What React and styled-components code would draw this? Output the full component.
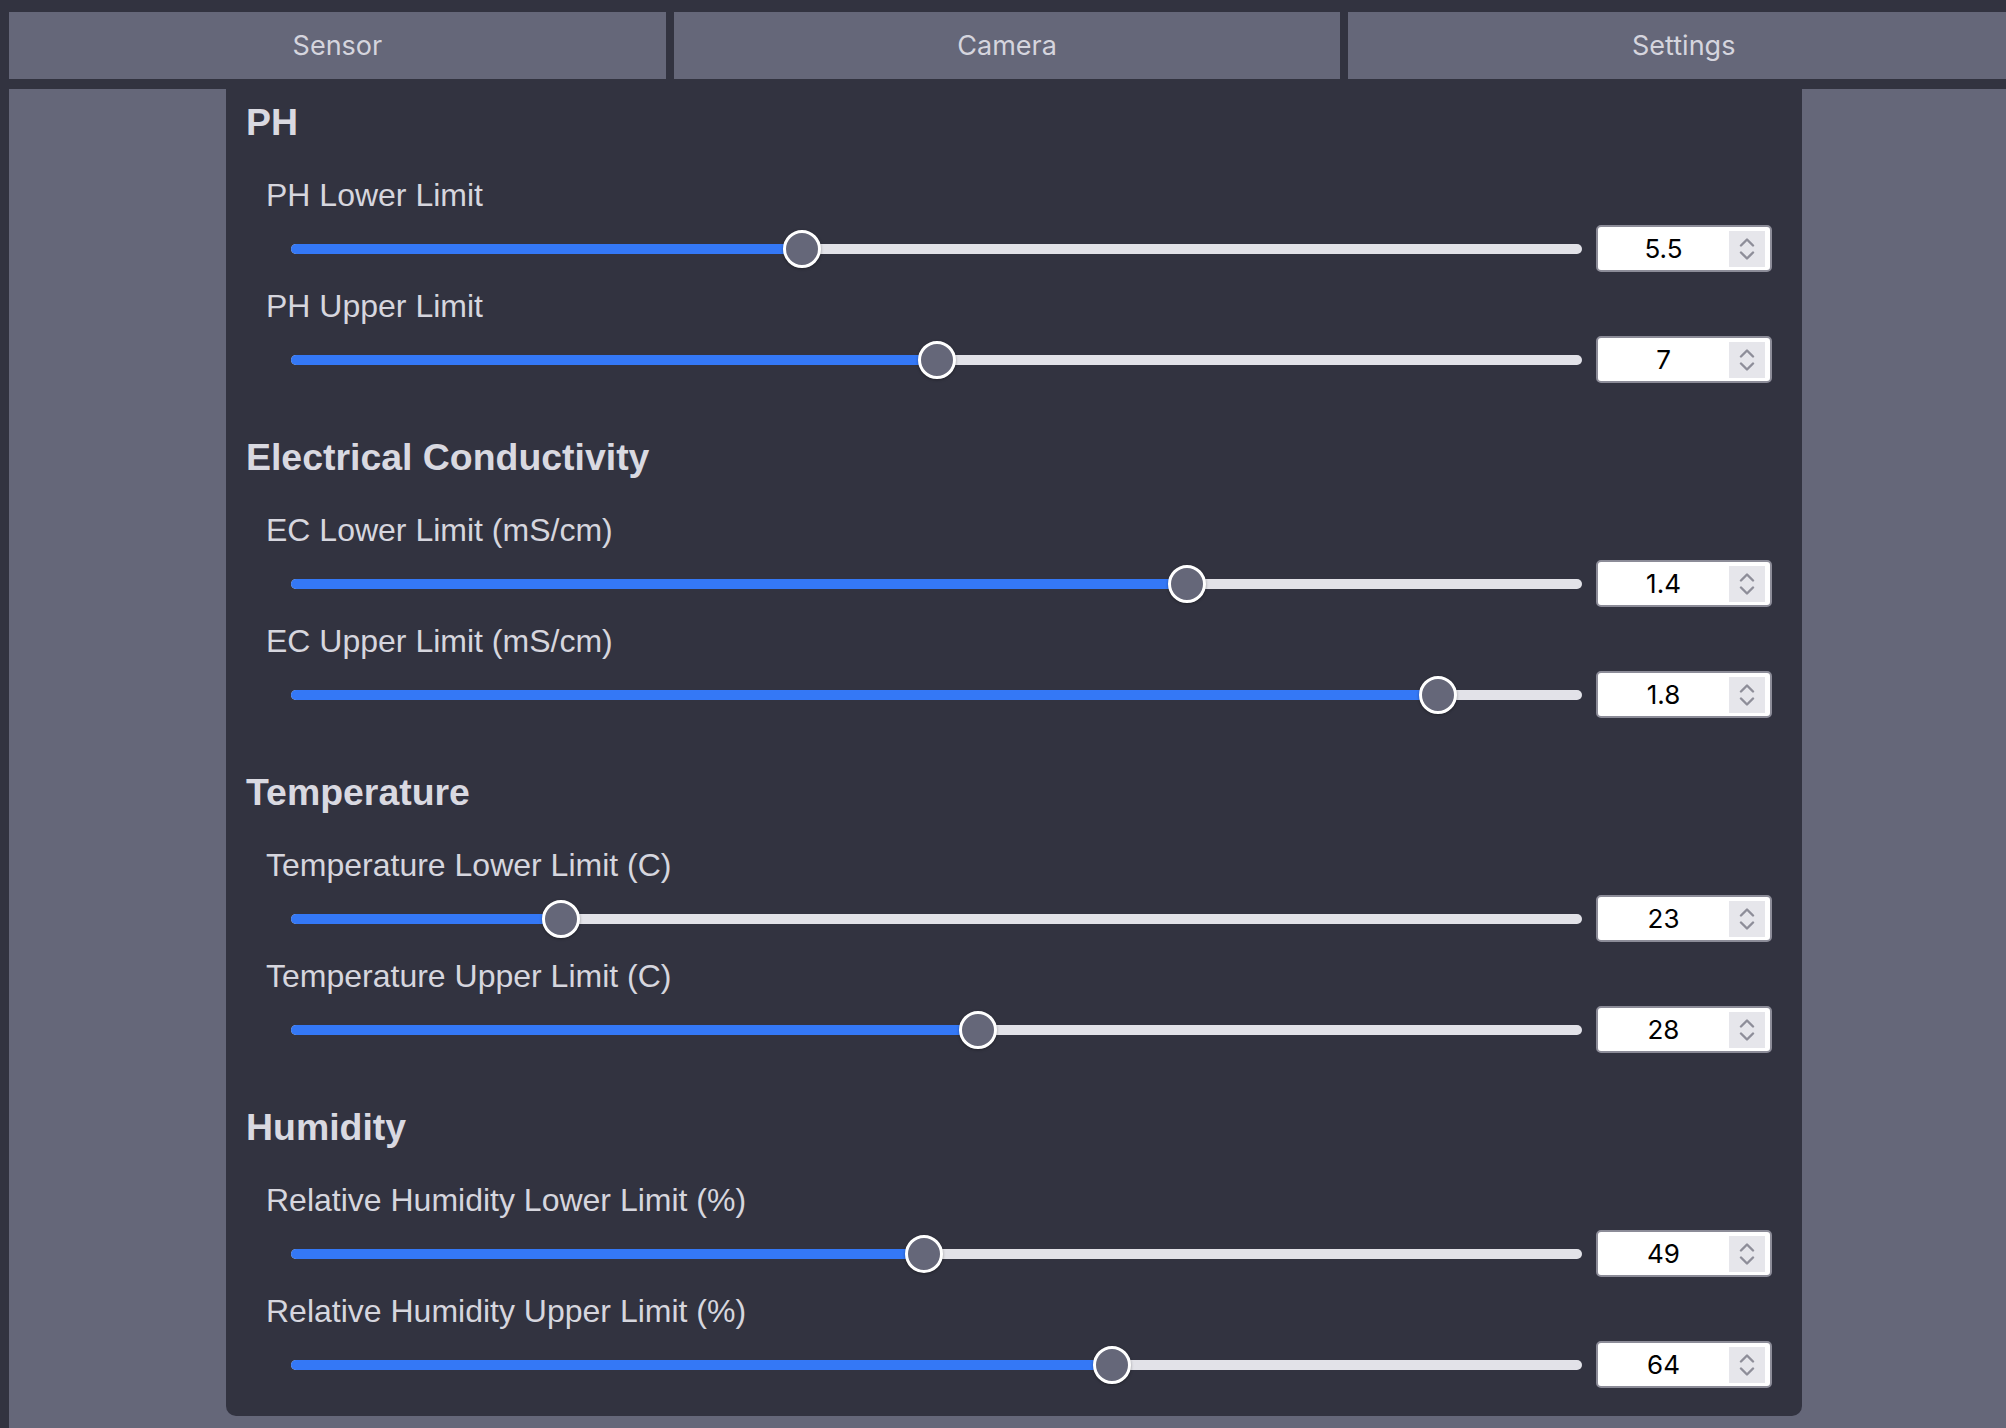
import styled, { createGlobalStyle } from "styled-components";

const GlobalStyle = createGlobalStyle`
  html, body {
    margin: 0;
    padding: 0;
    background: #323340;
    overflow: hidden;
  }
  body {
    font-family: "Liberation Sans", Arial, sans-serif;
  }
`;

const Page = styled.div`
  min-height: 100vh;
  width: calc(100% + 13px);
  padding: 12px 0 0 9px;
  box-sizing: border-box;
  display: flex;
  flex-direction: column;
`;

const TabBar = styled.nav`
  display: flex;
  gap: 8px;
  height: 67px;
  margin-bottom: 10px;
`;

const Tab = styled.button`
  flex: 1 1 auto;
  border: none;
  background: #656779;
  color: #d5d5de;
  font-family: Inter, "Noto Sans", sans-serif;
  font-size: 27px;
  padding: 0;
  cursor: pointer;
`;

const Content = styled.main`
  flex: 1;
  display: flex;
  justify-content: center;
  background: #656779;
`;

const Panel = styled.section`
  width: 1576px;
  box-sizing: border-box;
  padding: 12px 30px 28px 20px;
  background: #323340;
  border-radius: 0 0 10px 10px;
  align-self: flex-start;
`;

const Group = styled.div`
  display: flex;
  flex-direction: column;
  & + & {
    margin-top: 53px;
  }
`;

const Heading = styled.h3`
  margin: 0 0 33px;
  font-size: 37.44px;
  line-height: 43px;
  font-weight: 700;
  color: #d9d9e1;
`;

const Field = styled.div`
  padding-left: 20px;
  & + & {
    margin-top: 16px;
  }
`;

const Label = styled.label`
  display: block;
  font-size: 32px;
  line-height: 37px;
  color: #d6d6de;
  margin-bottom: 11px;
`;

const Row = styled.div`
  display: flex;
  align-items: center;
  gap: 14px;
  height: 47px;
  padding-left: 25px;
`;

const Track = styled.div`
  position: relative;
  flex: 1;
  height: 10px;
  border-radius: 5px;
  background: #e2e2e8;
`;

const Fill = styled.div`
  height: 100%;
  border-radius: 5px;
  background: #3478f6;
`;

const Thumb = styled.div`
  position: absolute;
  top: 50%;
  width: 38px;
  height: 38px;
  margin-top: -19px;
  box-sizing: border-box;
  border-radius: 50%;
  border: 3px solid #ffffff;
  background: #656779;
  box-shadow: 0 1px 3px rgba(0, 0, 0, 0.35);
`;

const NumberBox = styled.div`
  width: 176px;
  height: 47px;
  box-sizing: border-box;
  display: flex;
  align-items: center;
  background: #ffffff;
  border: 2px solid #8c8c98;
  border-radius: 5px;
  padding-right: 5px;
`;

const Value = styled.span`
  flex: 1;
  text-align: center;
  font-family: Inter, "Noto Sans", sans-serif;
  font-size: 26px;
  color: #000;
`;

const Spinner = styled.div`
  width: 36px;
  height: 36px;
  background: #e6e6eb;
  display: flex;
  flex-direction: column;
  align-items: center;
  justify-content: center;
  gap: 4px;
  svg {
    display: block;
  }
`;

function Chevron({ up }) {
  return (
    <svg width="16" height="9" viewBox="0 0 16 9">
      <path
        d={up ? "M2 7.5 L8 1.5 L14 7.5" : "M2 1.5 L8 7.5 L14 1.5"}
        fill="none"
        stroke="#8e8e99"
        strokeWidth="2.4"
        strokeLinecap="round"
        strokeLinejoin="round"
      />
    </svg>
  );
}

function Slider({ label, value, min, max }) {
  const f = (value - min) / (max - min);
  return (
    <Field>
      <Label>{label}</Label>
      <Row>
        <Track>
          <Fill style={{ width: `calc(19px + ${f} * (100% - 38px))` }} />
          <Thumb style={{ left: `calc(${f} * (100% - 38px))` }} />
        </Track>
        <NumberBox>
          <Value>{value}</Value>
          <Spinner>
            <Chevron up />
            <Chevron />
          </Spinner>
        </NumberBox>
      </Row>
    </Field>
  );
}

const groups = [
  {
    title: "PH",
    fields: [
      { label: "PH Lower Limit", value: 5.5, min: 0, max: 14 },
      { label: "PH Upper Limit", value: 7, min: 0, max: 14 },
    ],
  },
  {
    title: "Electrical Conductivity",
    fields: [
      { label: "EC Lower Limit (mS/cm)", value: 1.4, min: 0, max: 2 },
      { label: "EC Upper Limit (mS/cm)", value: 1.8, min: 0, max: 2 },
    ],
  },
  {
    title: "Temperature",
    fields: [
      { label: "Temperature Lower Limit (C)", value: 23, min: 20, max: 35 },
      { label: "Temperature Upper Limit (C)", value: 28, min: 20, max: 35 },
    ],
  },
  {
    title: "Humidity",
    fields: [
      { label: "Relative Humidity Lower Limit (%)", value: 49, min: 0, max: 100 },
      { label: "Relative Humidity Upper Limit (%)", value: 64, min: 0, max: 100 },
    ],
  },
];

export default function App() {
  return (
    <>
      <GlobalStyle />
      <Page>
        <TabBar>
          <Tab>Sensor</Tab>
          <Tab>Camera</Tab>
          <Tab>Settings</Tab>
        </TabBar>
        <Content>
          <Panel>
            {groups.map((g) => (
              <Group key={g.title}>
                <Heading>{g.title}</Heading>
                {g.fields.map((fd) => (
                  <Slider key={fd.label} {...fd} />
                ))}
              </Group>
            ))}
          </Panel>
        </Content>
      </Page>
    </>
  );
}
